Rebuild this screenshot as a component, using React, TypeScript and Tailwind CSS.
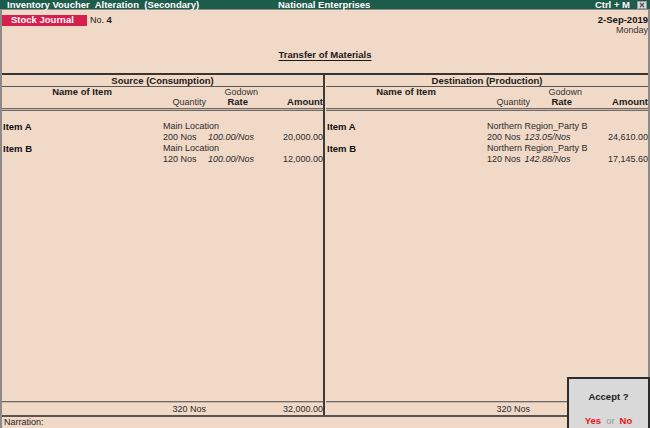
import React from "react"

type Line = {
  name: string
  godown: string
  qty: string
  rate: string
  amount: string
}

const source: Line[] = [
  { name: "Item A", godown: "Main Location", qty: "200 Nos", rate: "100.00/Nos", amount: "20,000.00" },
  { name: "Item B", godown: "Main Location", qty: "120 Nos", rate: "100.00/Nos", amount: "12,000.00" },
]

const destination: Line[] = [
  { name: "Item A", godown: "Northern Region_Party B", qty: "200 Nos", rate: "123.05/Nos", amount: "24,610.00" },
  { name: "Item B", godown: "Northern Region_Party B", qty: "120 Nos", rate: "142.88/Nos", amount: "17,145.60" },
]

function Half({
  title,
  lines,
  qtyWidth,
  totalQty,
  totalAmount,
  className,
}: {
  title: string
  lines: Line[]
  qtyWidth: string
  totalQty: string
  totalAmount: string
  className: string
}) {
  return (
    <div className={"flex flex-col " + className}>
      {/* section heading */}
      <div className="h-[12px] border-b border-[#5c5652] text-center text-[9.5px] font-bold leading-[12px] text-[#1a1a1a]">
        {title}
      </div>

      {/* column headings */}
      <div className="flex h-[10px] leading-[10px]">
        <div className="w-[160px] text-center text-[9.5px] font-bold text-[#1a1a1a]">Name of Item</div>
        <div className="w-[96px] text-right text-[#333]">Godown</div>
      </div>
      <div className="flex h-[10px] leading-[10px]">
        <div className="w-[204px] text-right text-[#333]">Quantity</div>
        <div className="w-[42px] text-right text-[9.5px] font-bold text-[#1a1a1a]">Rate</div>
        <div className="flex-1 text-right text-[9.5px] font-bold text-[#1a1a1a]">Amount</div>
      </div>
      <div className="mt-[1px] h-[3px] border-y border-[#6f6a66] bg-[#c9b6a8]" />

      {/* entries */}
      <div className="mt-[10px] flex flex-col">
        {lines.map((l) => (
          <div key={l.name} className="flex flex-col">
            <div className="flex h-[11px] leading-[11px]">
              <div className="w-[161px] shrink-0 pl-[1px] text-[9.5px] font-bold text-[#111]">{l.name}</div>
              <div className="whitespace-nowrap text-[#2a2a2a]">{l.godown}</div>
            </div>
            <div className="flex h-[11px] whitespace-nowrap leading-[11px] text-[#2a2a2a]">
              <div className="w-[161px] shrink-0" />
              <div className={"shrink-0 " + qtyWidth}>{l.qty}</div>
              <div className="flex-1 italic">{l.rate}</div>
              <div className="text-right">{l.amount}</div>
            </div>
          </div>
        ))}
      </div>

      <div className="flex-1" />

      {/* totals */}
      <div className="h-[2px] border-t border-[#6f6a66] bg-[#c9b6a8]" />
      <div className="flex h-[12px] leading-[12px] text-[#2a2a2a]">
        <div className="w-[204px] text-right">{totalQty}</div>
        <div className="flex-1 text-right">{totalAmount}</div>
      </div>
    </div>
  )
}

export default function App() {
  return (
    <div className="relative flex h-[428px] w-[650px] flex-col overflow-hidden bg-[#f1d9c8] font-['Liberation_Sans',Arial,sans-serif] text-[9px] text-[#222]">
      {/* title bar */}
      <div className="grid h-[10px] grid-cols-[278px_1fr_auto] items-center border-b border-[#8c8c8c] bg-[#1d5b4b] text-[9.5px] font-bold leading-[10px] text-white">
        <span className="whitespace-pre pl-[7px]">Inventory Voucher  Alteration  (Secondary)</span>
        <span>National Enterprises</span>
        <span className="flex items-center gap-[7px] pr-[3px]">
          <span>Ctrl + M</span>
          <svg width="10" height="8" viewBox="0 0 10 8">
            <rect x="0.5" y="0.5" width="9" height="7" fill="#d9d9d9" stroke="#9a9a9a" />
            <path d="M3 2 L7 6 M7 2 L3 6" stroke="#555" strokeWidth="1.2" />
          </svg>
        </span>
      </div>

      <div className="flex flex-1 flex-col border-x-2 border-[#8d8b89]">
        {/* voucher header */}
        <div className="flex h-[63px] flex-col">
          <div className="mt-[5px] flex items-start justify-between">
            <div className="flex h-[11px] items-center">
              <div className="flex h-[11px] w-[85px] items-center bg-[#d6214f] pl-[9px] text-[9.5px] font-bold text-white">
                Stock Journal
              </div>
              <span className="ml-[3px] text-[#222]">
                No. <span className="text-[9.5px] font-bold">4</span>
              </span>
            </div>
            <div className="flex flex-col items-end leading-[10px]">
              <span className="text-[9.5px] font-bold text-[#111]">2-Sep-2019</span>
              <span className="text-[#333]">Monday</span>
            </div>
          </div>
          <div className="mt-[13px] text-center">
            <span className="text-[9.5px] font-bold text-[#1a1a1a] underline underline-offset-2">Transfer of Materials</span>
          </div>
        </div>

        <div className="h-[2px] bg-[#3b3532]" />

        {/* source / destination */}
        <div className="flex flex-1">
          <Half
            title="Source (Consumption)"
            lines={source}
            qtyWidth="w-[45px]"
            totalQty="320 Nos"
            totalAmount="32,000.00"
            className="w-[323px] border-r-2 border-[#3d3a38]"
          />
          <Half
            title="Destination (Production)"
            lines={destination}
            qtyWidth="pr-[4px]"
            totalQty="320 Nos"
            totalAmount=""
            className="flex-1 pl-[1px]"
          />
        </div>

        <div className="h-[2px] bg-[#5a5450]" />
        <div className="h-[11px] pl-[2px] leading-[11px] text-[#222]">Narration:</div>
      </div>

      {/* accept prompt */}
      <div className="absolute bottom-0 right-0 flex h-[51px] w-[83px] flex-col items-center border-2 border-b-0 border-[#2b2b2b] bg-[#d9d9d9]">
        <div className="mt-[13px] text-[9.5px] font-bold leading-[10px] text-[#1a1a1a]">Accept ?</div>
        <div className="mt-[14px] text-[9.5px] leading-[10px]">
          <span className="font-bold text-[#e8141c]">Yes</span>
          <span className="mx-[5px] font-normal text-[#9a9a9a]">or</span>
          <span className="font-bold text-[#e8141c]">No</span>
        </div>
      </div>
    </div>
  )
}
